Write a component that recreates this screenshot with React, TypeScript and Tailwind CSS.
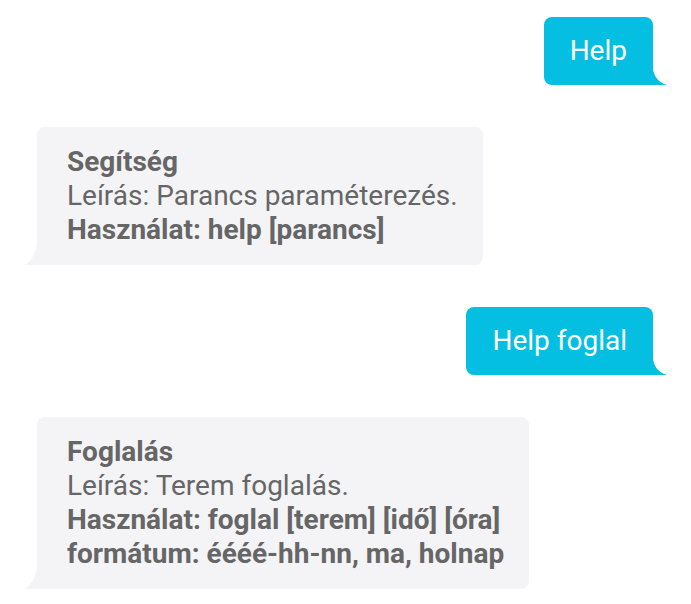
import React from "react";

type Msg = { from: "user" | "bot"; lines: { text: string; bold?: boolean }[] };

const messages: Msg[] = [
  { from: "user", lines: [{ text: "Help" }] },
  {
    from: "bot",
    lines: [
      { text: "Segítség", bold: true },
      { text: "Leírás: Parancs paraméterezés." },
      { text: "Használat: help [parancs]", bold: true },
    ],
  },
  { from: "user", lines: [{ text: "Help foglal" }] },
  {
    from: "bot",
    lines: [
      { text: "Foglalás", bold: true },
      { text: "Leírás: Terem foglalás." },
      { text: "Használat: foglal [terem] [idő] [óra]", bold: true },
      { text: "formátum: éééé-hh-nn, ma, holnap", bold: true },
    ],
  },
];

function UserBubble({ msg }: { msg: Msg }) {
  return (
    <div className="flex justify-end">
      <div className="relative rounded-t-lg rounded-bl-lg bg-[#04bfe2] px-[26px] h-[68px] flex items-center text-white text-[28px]">
        {msg.lines[0].text}
        <svg
          className="absolute right-[-14px] bottom-0"
          width="15"
          height="22"
          viewBox="0 0 15 22"
        >
          <path d="M0 0 C1 12 5 19 15 22 L0 22 Z" fill="#04bfe2" />
        </svg>
      </div>
    </div>
  );
}

function BotBubble({ msg }: { msg: Msg }) {
  return (
    <div className="flex justify-start">
      <div className="relative rounded-t-lg rounded-br-lg bg-[#f4f4f6] pl-[30px] pr-[25px] py-[18px] text-[#666666] text-[28px] leading-[34px]">
        {msg.lines.map((l, i) => (
          <div key={i} className={l.bold ? "font-bold" : ""}>
            {l.text}
          </div>
        ))}
        <svg
          className="absolute left-[-13px] bottom-0"
          width="14"
          height="30"
          viewBox="0 0 14 30"
        >
          <path d="M14 0 C13 15 9 26 0 30 L14 30 Z" fill="#f4f4f6" />
        </svg>
      </div>
    </div>
  );
}

export default function App() {
  return (
    <div
      className="min-h-screen bg-white pt-[17px] pl-[37px] pr-[38px] flex flex-col gap-[42px]"
      style={{ fontFamily: "Roboto, 'Liberation Sans', sans-serif" }}
    >
      {messages.map((m, i) =>
        m.from === "user" ? <UserBubble key={i} msg={m} /> : <BotBubble key={i} msg={m} />
      )}
    </div>
  );
}
